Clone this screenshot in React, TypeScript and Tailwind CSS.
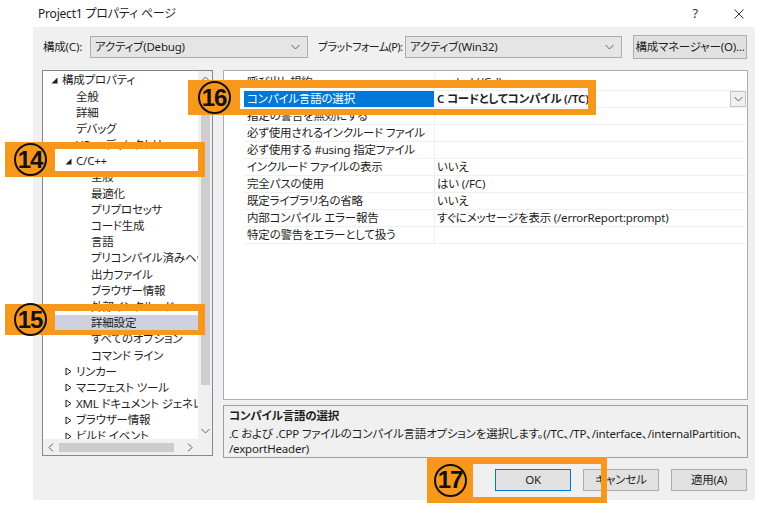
import React from "react";

const TREE = [
  { t: "構成プロパティ", lv: 0, icon: "open" },
  { t: "全般", lv: 1 },
  { t: "詳細", lv: 1 },
  { t: "デバッグ", lv: 1 },
  { t: "VC++ ディレクトリ", lv: 1 },
  { t: "C/C++", lv: 1, icon: "open" },
  { t: "全般", lv: 2 },
  { t: "最適化", lv: 2 },
  { t: "プリプロセッサ", lv: 2 },
  { t: "コード生成", lv: 2 },
  { t: "言語", lv: 2 },
  { t: "プリコンパイル済みヘッダー", lv: 2 },
  { t: "出力ファイル", lv: 2 },
  { t: "ブラウザー情報", lv: 2 },
  { t: "外部インクルード", lv: 2 },
  { t: "詳細設定", lv: 2, sel: true },
  { t: "すべてのオプション", lv: 2 },
  { t: "コマンド ライン", lv: 2 },
  { t: "リンカー", lv: 1, icon: "closed" },
  { t: "マニフェスト ツール", lv: 1, icon: "closed" },
  { t: "XML ドキュメント ジェネレーター", lv: 1, icon: "closed" },
  { t: "ブラウザー情報", lv: 1, icon: "closed" },
  { t: "ビルド イベント", lv: 1, icon: "closed" },
];

const PROPS = [
  { k: "呼び出し規約", v: "__cdecl (/Gd)" },
  { k: "コンパイル言語の選択", v: "C コードとしてコンパイル (/TC)", sel: true },
  { k: "指定の警告を無効にする", v: "" },
  { k: "必ず使用されるインクルード ファイル", v: "" },
  { k: "必ず使用する #using 指定ファイル", v: "" },
  { k: "インクルード ファイルの表示", v: "いいえ" },
  { k: "完全パスの使用", v: "はい (/FC)" },
  { k: "既定ライブラリ名の省略", v: "いいえ" },
  { k: "内部コンパイル エラー報告", v: "すぐにメッセージを表示 (/errorReport:prompt)" },
  { k: "特定の警告をエラーとして扱う", v: "" },
];

const PAD = ["pl-[8px]", "pl-[22px]", "pl-[37px]"];

function Chevron({ up = false, className = "" }: { up?: boolean; className?: string }) {
  return (
    <svg width="9" height="6" viewBox="0 0 9 6" className={className}>
      <path
        d={up ? "M0.5 5 L4.5 1 L8.5 5" : "M0.5 1 L4.5 5 L8.5 1"}
        fill="none"
        stroke="#606060"
        strokeWidth="1"
      />
    </svg>
  );
}

function Side({ left = false }: { left?: boolean }) {
  return (
    <svg width="6" height="9" viewBox="0 0 6 9">
      <path d={left ? "M5 0.5 L1 4.5 L5 8.5" : "M1 0.5 L5 4.5 L1 8.5"} fill="none" stroke="#606060" strokeWidth="1" />
    </svg>
  );
}

function TreeIcon({ kind }: { kind?: string }) {
  if (kind === "open")
    return (
      <svg width="7" height="7" viewBox="0 0 7 7">
        <path d="M6.5 0.5 L6.5 6.5 L0.5 6.5 Z" fill="#1e1e1e" />
      </svg>
    );
  if (kind === "closed")
    return (
      <svg width="7" height="9" viewBox="0 0 7 9">
        <path d="M1 1 L6 4.5 L1 8 Z" fill="none" stroke="#1e1e1e" strokeWidth="1" />
      </svg>
    );
  return null;
}

function Callout({ n, className, left, inner }: { n: string; className: string; left: string; inner: string }) {
  return (
    <div className={`absolute flex ${className}`}>
      <div className={`bg-[#f7981d] flex items-center justify-center ${left}`}>
        <div className="w-[33px] h-[33px] rounded-full border-[2.5px] border-[#111] flex items-center justify-center font-['Liberation_Sans_Narrow','Liberation_Sans',sans-serif] font-bold text-[24px] leading-none tracking-[-1px] text-[#111]">
          {n}
        </div>
      </div>
      <div className={`flex-1 border-[#f7981d] border-l-0 ${inner}`} />
    </div>
  );
}

export default function App() {
  return (
    <div className="relative w-[760px] h-[507px] overflow-hidden bg-white text-[11.5px] tracking-[-0.2px] text-[#1e1e1e] font-['Noto_Sans','Noto_Sans_CJK_JP',sans-serif] [font-feature-settings:'palt']">
      {/* title bar */}
      <div className="h-[27px] flex items-center pl-[38px] pr-[16px]">
        <span className="text-[12px]">Project1 プロパティ ページ</span>
        <span className="ml-auto mr-[36px] text-[13px] text-[#333]">?</span>
        <svg width="10" height="10" viewBox="0 0 10 10">
          <path d="M0.5 0.5 L9.5 9.5 M9.5 0.5 L0.5 9.5" stroke="#333" strokeWidth="1" />
        </svg>
      </div>

      {/* dialog body */}
      <div className="ml-[33px] w-[722px] h-[473px] bg-[#f0f0f0] pl-[9px] pt-[8px]">
        <div className="h-[24px] flex items-center whitespace-nowrap">
          <span className="w-[48px] pl-[1px]">構成(C):</span>
          <div className="w-[218px] h-[22px] border border-[#acacac] bg-[#e5e5e5] flex items-center pl-[4px] pr-[7px]">
            <span>アクティブ(Debug)</span>
            <Chevron className="ml-auto" />
          </div>
          <span className="w-[87px] ml-[10px] text-[11px] tracking-[-0.6px]">プラットフォーム(P):</span>
          <div className="w-[217px] h-[22px] border border-[#acacac] bg-[#e5e5e5] flex items-center pl-[4px] pr-[7px]">
            <span>アクティブ(Win32)</span>
            <Chevron className="ml-auto" />
          </div>
          <div className="ml-[11px] w-[114px] h-[24px] border border-[#adadad] bg-[#e1e1e1] flex items-center justify-center">
            構成マネージャー(O)...
          </div>
        </div>

        <div className="mt-[11px] flex">
          {/* tree */}
          <div className="w-[171px] h-[386px] border border-[#828790] bg-white flex flex-col">
            <div className="flex flex-1 min-h-0">
              <div className="flex-1 min-w-0 overflow-hidden pt-[1px]">
                {TREE.map((r, i) => (
                  <div
                    key={i}
                    className={`h-[16.2px] flex items-center whitespace-nowrap ${PAD[r.lv]} ${r.sel ? "bg-[#cfd2de]" : ""}`}
                  >
                    <span className="w-[11px] shrink-0 flex items-center">
                      <TreeIcon kind={r.icon} />
                    </span>
                    <span className="leading-none shrink-0">{r.t}</span>
                  </div>
                ))}
              </div>
              <div className="w-[14px] shrink-0 bg-[#f0f0f0] flex flex-col items-center">
                <div className="h-[16px] flex items-center">
                  <Chevron up />
                </div>
                <div className="w-[9px] h-[298px] bg-[#cdcdcd]" />
                <div className="mt-auto h-[16px] flex items-center">
                  <Chevron />
                </div>
              </div>
            </div>
            <div className="h-[16px] flex bg-[#f0f0f0]">
              <div className="flex-1 flex items-center">
                <div className="w-[16px] flex justify-center">
                  <Side left />
                </div>
                <div className="w-[115px] h-[9px] bg-[#cdcdcd]" />
                <div className="ml-auto w-[16px] flex justify-center">
                  <Side />
                </div>
              </div>
              <div className="w-[14px]" />
            </div>
          </div>

          {/* right column */}
          <div className="ml-[10px] w-[525px] flex flex-col">
            <div className="h-[330px] border border-[#abadb3] bg-white pt-[3px] pl-[20px] pr-[1px]">
              {PROPS.map((p, i) => (
                <div key={i} className="h-[17px] flex border-b border-[#f0f0f0]">
                  <div
                    className={`w-[190px] shrink-0 flex items-center pl-[3px] whitespace-nowrap overflow-hidden ${p.sel ? "bg-[#0078d7] text-white" : ""}`}
                  >
                    {p.k}
                  </div>
                  <div className="flex-1 flex items-center pl-[2px] border-l border-[#f0f0f0] whitespace-nowrap">
                    <span className={p.sel ? "font-semibold" : ""}>{p.v}</span>
                    {p.sel && (
                      <div className="ml-auto w-[16px] h-[16px] border border-[#c4c4c4] bg-[#f0f0f0] flex items-center justify-center">
                        <Chevron />
                      </div>
                    )}
                  </div>
                </div>
              ))}
            </div>
            <div className="mt-[5px] h-[53px] border border-[#a0a0a0] bg-[#f0f0f0] pl-[5px] pt-[2px] leading-[15px] whitespace-nowrap">
              <div className="font-bold">コンパイル言語の選択</div>
              <div className="mt-[3px]">
                .C および .CPP ファイルのコンパイル言語オプションを選択します。(/TC、/TP、/interface、/internalPartition、
                <br />
                /exportHeader)
              </div>
            </div>
          </div>
        </div>

        {/* buttons */}
        <div className="mt-[11px] flex justify-end gap-[12px] pr-[8px]">
          <div className="w-[76px] h-[22px] border border-[#0078d7] bg-[#e1e1e1] flex items-center justify-center">OK</div>
          <div className="w-[76px] h-[22px] border border-[#adadad] bg-[#e1e1e1] flex items-center justify-center">キャンセル</div>
          <div className="w-[76px] h-[22px] border border-[#adadad] bg-[#e1e1e1] flex items-center justify-center">適用(A)</div>
        </div>
      </div>

      {/* orange callouts */}
      <Callout n="14" className="left-[5px] top-[142px] w-[200px] h-[35px]" left="w-[50px]" inner="border-t-[7px] border-r-[7px] border-b-[6px]" />
      <Callout n="15" className="left-[5px] top-[304px] w-[200px] h-[31px]" left="w-[50px]" inner="border-t-[7px] border-r-[7px] border-b-[5px]" />
      <Callout n="16" className="left-[188px] top-[80px] w-[408px] h-[35px]" left="w-[52px]" inner="border-t-[8px] border-r-[8px] border-b-[6px]" />
      <Callout n="17" className="left-[427px] top-[457px] w-[180px] h-[46px]" left="w-[46px]" inner="border-t-[7px] border-r-[6px] border-b-[6px]" />
    </div>
  );
}
